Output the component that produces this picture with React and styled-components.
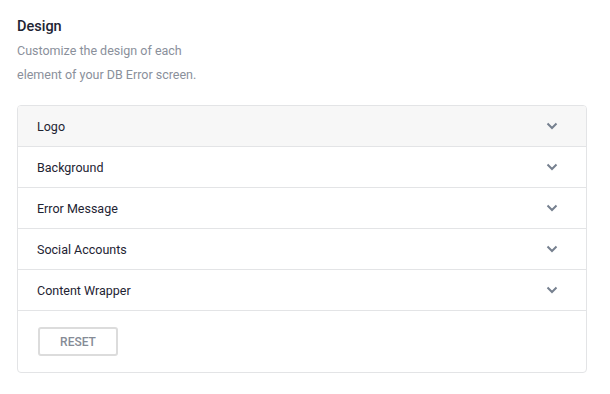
import React, { useState } from 'react';
import styled, { createGlobalStyle } from 'styled-components';

const GlobalStyle = createGlobalStyle`
  body {
    margin: 0;
    background: #ffffff;
    font-family: Roboto, "Liberation Sans", sans-serif;
  }
`;

const Page = styled.div`
  padding: 18px 23px 0 17px;
  width: 570px;
`;

const Heading = styled.h2`
  margin: 0;
  font-size: 14.5px;
  line-height: 18px;
  font-weight: 500;
  color: #1e2433;
`;

const Intro = styled.p`
  margin: 3px 0 0;
  width: 190px;
  font-size: 12.5px;
  line-height: 24px;
  color: #8a909b;
`;

const Panel = styled.div`
  margin-top: 18px;
  border: 1px solid #e3e4e6;
  border-radius: 4px;
  overflow: hidden;
`;

const Row = styled.button`
  display: flex;
  align-items: center;
  justify-content: space-between;
  width: 100%;
  height: 41px;
  padding: 0 28px 0 19px;
  border: 0;
  border-bottom: 1px solid #e3e4e6;
  background: ${(p) => (p.$active ? '#f7f7f7' : '#ffffff')};
  font-family: inherit;
  font-size: 12.5px;
  font-weight: 400;
  color: #1e2433;
  text-align: left;
  cursor: pointer;
`;

const Chevron = styled.svg`
  width: 12px;
  height: 8px;
  color: #76808f;
`;

const Footer = styled.div`
  padding: 16px 20px;
`;

const ResetButton = styled.button`
  width: 80px;
  height: 29px;
  border: 2px solid #dcdcdc;
  border-radius: 3px;
  background: #ffffff;
  font-family: inherit;
  font-size: 12px;
  font-weight: 500;
  color: #858b96;
  cursor: pointer;
`;

const sections = ['Logo', 'Background', 'Error Message', 'Social Accounts', 'Content Wrapper'];

export default function App() {
  const [active] = useState('Logo');

  return (
    <Page>
      <GlobalStyle />
      <Heading>Design</Heading>
      <Intro>Customize the design of each element of your DB Error screen.</Intro>
      <Panel>
        {sections.map((name) => (
          <Row key={name} $active={name === active}>
            {name}
            <Chevron viewBox="0 0 12 8" fill="none">
              <path d="M1.5 1.5 L6 6 L10.5 1.5" stroke="currentColor" strokeWidth="2" />
            </Chevron>
          </Row>
        ))}
        <Footer>
          <ResetButton>RESET</ResetButton>
        </Footer>
      </Panel>
    </Page>
  );
}
